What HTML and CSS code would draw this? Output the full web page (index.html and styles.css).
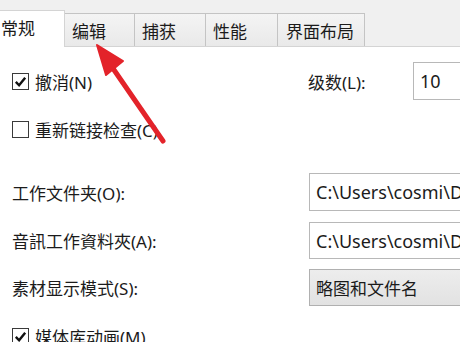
FILE: index.html
```html
<!DOCTYPE html>
<html lang="zh-CN">
<head>
    <meta charset="UTF-8">
    <title>选项</title>
    <link rel="stylesheet" href="styles.css">
</head>
<body>
    <div class="tabs">
        <div class="tab active">常规</div>
        <div class="tab w70">编辑</div>
        <div class="tab w71">捕获</div>
        <div class="tab w72">性能</div>
        <div class="tab w87">界面布局</div>
    </div>

    <div class="panel">
        <div class="row row-first">
            <label class="check checked"><span class="box"><svg viewBox="0 0 16 16"><path d="M3 8.5 L6.5 12 L13 4" /></svg></span>撤消(N)</label>
            <div class="field levels">
                <span>级数(L):</span>
                <div class="input small">10</div>
            </div>
        </div>

        <div class="row row-relink">
            <label class="check"><span class="box"></span>重新链接检查(C)</label>
        </div>

        <div class="row row-work">
            <span class="label">工作文件夹(O):</span>
            <div class="input wide">C:\Users\cosmi\Documents\Camtasia</div>
        </div>

        <div class="row row-audio">
            <span class="label">音訊工作資料夾(A):</span>
            <div class="input wide">C:\Users\cosmi\Documents\Camtasia</div>
        </div>

        <div class="row row-mode">
            <span class="label">素材显示模式(S):</span>
            <div class="input select">略图和文件名</div>
        </div>

        <div class="row row-anim">
            <label class="check checked"><span class="box"><svg viewBox="0 0 16 16"><path d="M3 8.5 L6.5 12 L13 4" /></svg></span>媒体库动画(M)</label>
        </div>
    </div>

    <!-- red pointer drawn over the dialog -->
    <svg class="arrow" viewBox="0 0 460 342">
        <line x1="112" y1="67" x2="163" y2="141" />
        <polygon points="97,45 123,61 106,75" />
    </svg>
</body>
</html>
```

FILE: styles.css
```css
html, body {
    margin: 0;
    overflow: hidden;
}

body {
    width: 460px;
    height: 342px;
    position: relative;
    background: #ffffff;
    color: #1b1b1b;
    font-family: "Noto Sans", "Noto Sans CJK SC", sans-serif;
    font-size: 17px;
}

.tabs {
    display: flex;
    align-items: flex-end;
    height: 46px;
    background: #f0f0f0;
    border-bottom: 1px solid #d4d4d4;
}

.tab {
    box-sizing: border-box;
    height: 33px;
    padding-left: 7px;
    display: flex;
    align-items: center;
    background: linear-gradient(#f4f4f4, #e9e9e9);
    border: 1px solid #c4c4c4;
    border-left: none;
    border-bottom: none;
    white-space: nowrap;
}

.tab.active {
    height: 37px;
    width: 71px;
    margin-left: -6px;
    margin-bottom: -1px;
    padding-left: 7px;
    padding-bottom: 3px;
    background: #ffffff;
    border-color: #d4d4d4;
}

.w70 { width: 70px; }
.w71 { width: 71px; }
.w72 { width: 72px; }
.w87 { width: 87px; padding-left: 8px; }

.panel {
    padding: 15px 0 0 12px;
}

.row {
    display: flex;
    align-items: center;
    white-space: nowrap;
}

.row-first { height: 38px; }
.row-relink { height: 34px; margin-top: 12px; }
.row-work { height: 38px; margin-top: 27px; }
.row-audio { height: 37px; margin-top: 11px; }
.row-mode { height: 37px; margin-top: 10px; }
.row-anim { height: 34px; margin-top: 13px; }

.label {
    width: 297px;
    flex-shrink: 0;
}

.check {
    width: 296px;
    flex-shrink: 0;
    display: flex;
    align-items: center;
    gap: 6px;
}

.box {
    box-sizing: border-box;
    width: 17px;
    height: 17px;
    border: 1px solid #3a3a3a;
    background: #ffffff;
    display: flex;
}

.box svg {
    width: 15px;
    height: 15px;
}

.box path {
    fill: none;
    stroke: #111111;
    stroke-width: 2.6;
}

.field {
    display: flex;
    align-items: center;
}

.levels span {
    width: 105px;
}

.input {
    box-sizing: border-box;
    height: 100%;
    display: flex;
    align-items: center;
    padding-left: 6px;
    border: 1px solid #b8b8b8;
    background: #ffffff;
    overflow: hidden;
    flex-shrink: 0;
    font-size: 18px;
}

.small {
    width: 80px;
    height: 38px;
}

.wide {
    width: 200px;
}

.select {
    width: 200px;
    font-size: 17px;
    background: linear-gradient(#ededed, #e2e2e2);
    border-color: #b0b0b0;
}

.arrow {
    position: absolute;
    left: 0;
    top: 0;
    width: 460px;
    height: 342px;
    pointer-events: none;
}

.arrow line {
    stroke: #e3232a;
    stroke-width: 5;
    stroke-linecap: round;
}

.arrow polygon {
    fill: #e3232a;
    stroke: #e3232a;
    stroke-width: 2;
    stroke-linejoin: round;
}
```
